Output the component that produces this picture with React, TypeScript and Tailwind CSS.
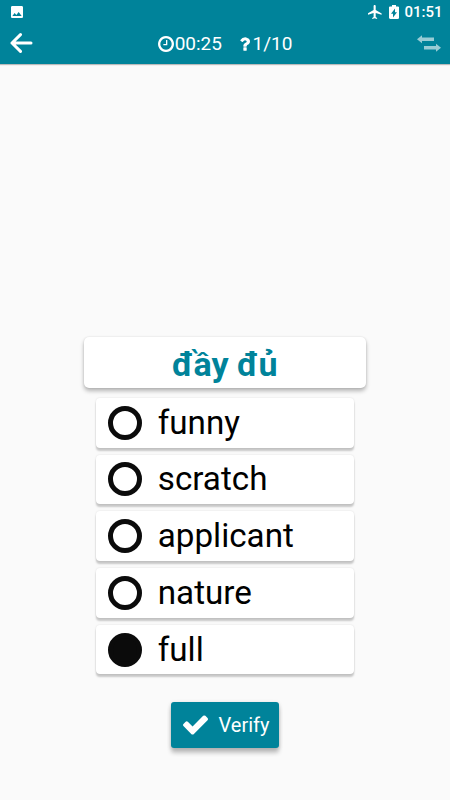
import React from "react";

const options = ["funny", "scratch", "applicant", "nature", "full"];
const selected = 4;

function StatusBar() {
  return (
    <div className="flex h-6 items-center justify-between pr-[7.500px] pl-[11px] text-white">
      <svg className="mb-px h-3 w-3" viewBox="3 3 18 18" fill="currentColor">
        <path d="M21 19V5c0-1.100-.9-2-2-2H5c-1.100 0-2 .9-2 2v14c0 1.100.9 2 2 2h14c1.100 0 2-.9 2-2zM8.500 13.500l2.500 3.010L14.500 12l4.500 6H5l3.500-4.500z" />
      </svg>
      <div className="flex items-center">
        <svg className="mr-[7px] mb-px h-[14px] w-[14px]" viewBox="2 2 20 20" fill="currentColor">
          <path d="M21.500 16v-2l-8.500-5V3.500c0-.83-.67-1.500-1.500-1.500S10 2.670 10 3.500V9l-8.500 5v2l8.500-2.500V19l-2 1.500V22l3.500-1 3.500 1v-1.500L13 19v-5.500l8.500 2.500z" />
        </svg>
        <svg className="mr-[5px] mb-px h-[14px] w-[10px]" viewBox="7 2 10 20" preserveAspectRatio="none" fill="currentColor">
          <path d="M15.670 4H14V2h-4v2H8.330C7.600 4 7 4.600 7 5.330v15.330C7 21.400 7.600 22 8.330 22h7.330c.74 0 1.340-.6 1.340-1.330V5.330C17 4.600 16.400 4 15.670 4zM11 20v-5.500H9L13 7v5.500h2L11 20z" />
        </svg>
        <span className="text-[15px] leading-6 font-medium">01:51</span>
      </div>
    </div>
  );
}

function Toolbar() {
  return (
    <div className="grid h-10 grid-cols-[1fr_auto_1fr] items-center px-[9px] pb-[2px] text-white">
      <svg className="h-5 w-[24px]" viewBox="-0.500 0 24 20" fill="none" stroke="currentColor" strokeWidth="3" strokeLinecap="round" strokeLinejoin="round">
        <path d="M21.500 10H2.500M11 1.600L2.500 10l8.500 8.400" />
      </svg>
      <div className="flex items-center pt-px text-[19px] leading-6">
        <svg className="mr-px h-4 w-4" viewBox="128 128 1536 1536" fill="currentColor">
          <path d="M1024 544v448q0 14-9 23t-23 9h-320q-14 0-23-9t-9-23v-64q0-14 9-23t23-9h224v-352q0-14 9-23t23-9h64q14 0 23 9t9 23zm416 352q0-148-73-273t-198-198-273-73-273 73-198 198-73 273 73 273 198 198 273 73 273-73 198-198 73-273zm224 0q0 209-103 385.500t-279.500 279.500-385.500 103-385.500-103-279.500-279.500-103-385.500 103-385.500 279.500-279.500 385.500-103 385.500 103 279.500 279.500 103 385.500z" />
        </svg>
        <span className="pt-px">00:25</span>
        <svg className="mr-[2px] ml-[18.500px] h-[14px] w-[10px]" viewBox="446 256 958 1280" fill="currentColor">
          <path d="M1088 1256v240q0 16-12 28t-28 12h-240q-16 0-28-12t-12-28v-240q0-16 12-28t28-12h240q16 0 28 12t12 28zm316-600q0 54-15.500 101t-35 76.500-55 59.500-57.500 43.500-61 35.500q-41 23-68.500 65t-27.500 67q0 17-12 32.500t-28 15.500h-240q-15 0-25.500-18.500t-10.500-37.500v-45q0-83 65-156.500t143-108.500q59-27 84-56t25-76q0-42-46.500-74t-107.500-32q-65 0-108 29-35 25-107 115-13 16-31 16-12 0-25-8l-164-125q-13-10-15.500-25t5.500-28q160-266 464-266 80 0 161 31t146 83 106 127.500 41 158.500z" />
        </svg>
        <span className="pt-px">1/10</span>
      </div>
      <svg className="h-[17px] w-6 justify-self-end text-[#98ccd5]" viewBox="0 0 24 17" fill="currentColor">
        <path d="M0 4.200L5 0.200v2.300h12v3.400H5v2.300zM24 12.800l-5 4v-2.300H7v-3.400h12V8.800z" />
      </svg>
    </div>
  );
}

function Option({ label, checked }: { label: string; checked: boolean }) {
  return (
    <label className="flex h-[49.500px] w-[258px] items-center rounded-[4px] bg-white pl-3 shadow-[0_3px_2px_rgba(0,0,0,0.2),0_0_2px_rgba(0,0,0,0.12)]">
      <span className={"h-[34px] w-[34px] rounded-full border-[5px] border-[#0b0b0b] " + (checked ? "bg-[#0b0b0b]" : "")} />
      <span className="ml-4 text-[33.200px] leading-[48px] text-black">{label}</span>
    </label>
  );
}

export default function App() {
  return (
    <div className="flex h-[800px] w-[450px] flex-col overflow-hidden bg-[#fafafa] font-[Roboto,sans-serif]">
      <header className="h-16 shrink-0 bg-[#00839a] shadow-[0_1px_1px_rgba(0,0,0,0.25)]">
        <StatusBar />
        <Toolbar />
      </header>
      <main className="flex flex-1 flex-col items-center pt-[273px] pr-[0.500px]">
        <h1 className="flex h-[51px] w-[282px] items-center justify-center rounded-[5px] bg-white pt-[4px] text-[34px] leading-[51px] font-bold text-[#00839a] shadow-[0_3px_4px_rgba(0,0,0,0.28),0_0_2px_rgba(0,0,0,0.12)]">
          <span>đầy đủ</span>
        </h1>
        <div className="mt-[10px] flex flex-col gap-[7.200px]">
          {options.map((label, i) => (
            <Option key={label} label={label} checked={i === selected} />
          ))}
        </div>
        <button className="mt-[27.500px] flex h-[46.500px] w-[107.500px] items-center rounded-[3px] bg-[#00839a] pl-[11.500px] text-white shadow-[0_5px_4px_rgba(0,0,0,0.22),0_1px_4px_rgba(0,0,0,0.15)]">
          <svg className="h-5 w-[25px]" viewBox="121 334 1550 1188" fill="currentColor">
            <path d="M1671 566q0 40-28 68l-724 724-136 136q-28 28-68 28t-68-28l-136-136-362-362q-28-28-28-68t28-68l136-136q28-28 68-28t68 28l294 295 656-657q28-28 68-28t68 28l136 136q28 28 28 68z" />
          </svg>
          <span className="ml-[11px] text-[20px] leading-6">Verify</span>
        </button>
      </main>
    </div>
  );
}
